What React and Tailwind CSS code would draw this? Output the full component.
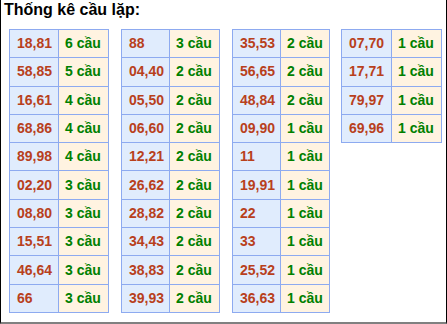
const tables = [
  { w: "w-[100px]", c1: "w-[49px]", rows: [["18,81",6],["58,85",5],["16,61",4],["68,86",4],["89,98",4],["02,20",3],["08,80",3],["15,51",3],["46,64",3],["66",3]] },
  { w: "w-[99px]", c1: "w-[48px]", rows: [["88",3],["04,40",2],["05,50",2],["06,60",2],["12,21",2],["26,62",2],["28,82",2],["34,43",2],["38,83",2],["39,93",2]] },
  { w: "w-[98px]", c1: "w-[48px]", rows: [["35,53",2],["56,65",2],["48,84",2],["09,90",1],["11",1],["19,91",1],["22",1],["33",1],["25,52",1],["36,63",1]] },
  { w: "w-[101px]", c1: "w-[50px]", rows: [["07,70",1],["17,71",1],["79,97",1],["69,96",1]] },
];

export default function App() {
  return (
    <div className="w-[447px] h-[324px] border-l border-r border-l-black border-r-black border-b-2 border-b-[#808080] bg-white overflow-hidden" style={{ fontFamily: '"Liberation Sans", Arial, sans-serif' }}>
      <div className="pl-[3px] pt-[1px] text-[16px] leading-[18px] font-bold text-black">Thống kê cầu lặp:</div>
      <div className="flex items-start mt-[10px] ml-[8px]">
        {tables.map((t, i) => (
          <div key={i} className={`${t.w} ${i < 3 ? (i === 2 ? "mr-[11px]" : "mr-[12px]") : ""} border-l border-t border-[#8daaf0] shrink-0`}>
            {t.rows.map(([n, c], j) => (
              <div key={j} className="flex h-[28.3px] text-[14px] font-bold">
                <div className={`${t.c1} shrink-0 bg-[#e0ecfd] border-r border-b border-[#8daaf0] flex items-center pl-[7px] text-[#b8401c]`}>{n}</div>
                <div className="flex-1 bg-[#fff3e1] border-r border-b border-[#8daaf0] flex items-center pl-[6px] text-[#008000]">{c} cầu</div>
              </div>
            ))}
          </div>
        ))}
      </div>
    </div>
  );
}
